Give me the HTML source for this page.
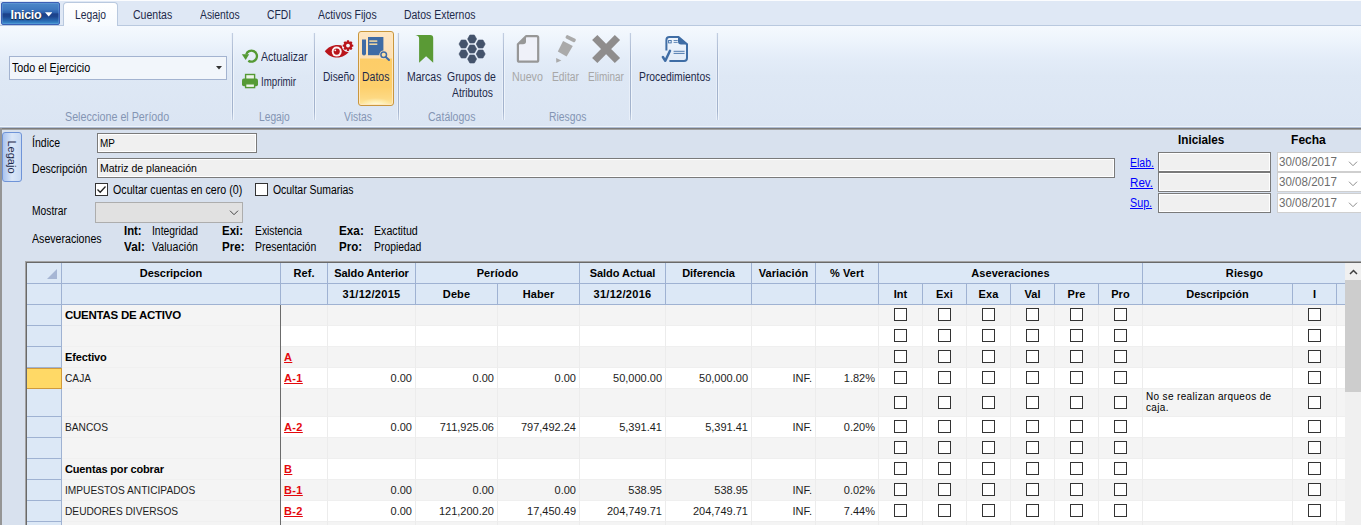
<!DOCTYPE html>
<html><head><meta charset="utf-8"><title>Legajo</title>
<style>
*{box-sizing:border-box;margin:0;padding:0}
html,body{width:1361px;height:525px;overflow:hidden}
body{font-family:"Liberation Sans",sans-serif;font-size:12px;color:#1e2a4a;background:#d8e1ee;position:relative}
.abs,.t{position:absolute;white-space:nowrap}
.t{line-height:14px;height:14px;transform-origin:0 50%}
#tabbar{position:absolute;left:0;top:0;width:1361px;height:26px;background:#dfe8f5;border-bottom:1px solid #b9c9df;border-top:1px solid #fbfcfe}
#inicio{position:absolute;left:1px;top:2px;width:59px;height:23px;border-radius:2px;border:1px solid #3a5fb6;background:linear-gradient(#4d88c9 0%,#3f78bf 30%,#2c60ad 46%,#1c4089 52%,#1d4690 65%,#2a6bb4 85%,#3d94d0 100%);box-shadow:inset 0 0 0 1px rgba(120,170,225,0.35);color:#fff;font-weight:bold;font-size:13px}
#tabsel{position:absolute;left:63px;top:2px;width:55px;height:25px;border:1px solid #b9c9df;border-bottom:0;border-radius:4px 4px 0 0;background:linear-gradient(#ffffff,#f6fafe)}
#ribbon{position:absolute;left:0;top:26px;width:1361px;height:100px;background:linear-gradient(#f5f9fe 0%,#edf4fc 15%,#e3ecf8 33%,#dee8f5 50%,#dbe5f3 100%)}
#ribbot{position:absolute;left:0;top:126px;width:1361px;height:4px;background:linear-gradient(#eef4fb 0,#eef4fb 1px,#aebcd3 1px,#aebcd3 2px,#7c7c7c 2px,#7c7c7c 3px,#a2a2a2 3px,#a2a2a2 4px)}
.sep{position:absolute;top:33px;width:1px;height:87px;background:linear-gradient(#c3cfe2,#a3b3cd 30%,#a3b3cd 90%,#c3cfe2);box-shadow:1px 0 0 #eef4fb,-1px 0 0 #e8eff9}
.gl{color:#8495b3}
.dis{color:#a7a7a7}
input{font-family:"Liberation Sans",sans-serif}
.tb{position:absolute;background:#f0f0f0;border:1px solid #7a7a7a;box-shadow:inset 1px 1px 0 #fff, inset -1px -1px 0 #fff}
.dp{position:absolute;background:#fff;border:1px solid #cfcfcf;color:#6d6d6d}
.chk{position:absolute;width:13px;height:13px;background:#fff;border:1px solid #333}
a.lk{position:absolute;color:#0000ff;text-decoration:underline;letter-spacing:-0.35px;line-height:14px}
#grid{position:absolute;left:26px;top:262px;width:1335px;height:263px;background:#fff;border-left:1px solid #696969;border-top:1px solid #696969;box-shadow:-1px 0 0 #a3a3a3,0 -1px 0 #a3a3a3,-1px -1px 0 #a3a3a3}
.h{position:absolute;background:#dce8f6;border-right:1px solid #9fb2d2;border-bottom:1px solid #9fb2d2;font-family:"Liberation Sans",sans-serif;font-weight:bold;font-size:11px;color:#000;text-align:center;line-height:20px;white-space:nowrap;overflow:hidden;letter-spacing:0.1px}
.r{position:absolute;left:0;width:1346px}
.rh{position:absolute;top:0;background:#dce8f6;border-right:1px solid #9fb2d2;border-bottom:1px solid #9fb2d2}
.rh.sel{background:#ffd966;border:1px solid #d09a3c;border-left:0}
.c{position:absolute;top:0;border-right:1px solid #ececec;border-bottom:1px solid #efefef;font-size:11px;color:#1c1c1c;white-space:nowrap;overflow:hidden}
.c.d{background:#f4f4f4;padding-left:3px;border-right:0;border-bottom:1px solid #f0f0f0}
.c.b{font-weight:bold;color:#000;letter-spacing:-0.15px}
.c.big{font-size:11.5px;letter-spacing:-0.25px}
.nr{display:inline-block;transform:scaleX(0.925);transform-origin:0 50%}
.c.ref{padding-left:3px;color:#e4080c;font-weight:bold;letter-spacing:0.35px}
.c.n{text-align:right;padding-right:3px}
.c.rk{white-space:normal;font-size:10px;line-height:11px;padding:2px 0 0 3px;letter-spacing:0.35px;color:#000}
.cb{position:absolute;left:15px;width:13px;height:13px;background:#fff;border:1px solid #333}
</style></head><body>

<!-- tab bar -->
<div id="tabbar"></div>
<div id="tabsel"></div>
<div id="inicio"><span class="t" style="left:8.500px;top:5px;font-size:12.500px;letter-spacing:-0.3px;text-shadow:0 1px 1px #123">Inicio</span>
<svg class="abs" style="left:43px;top:9px" width="7.400" height="4.600" viewBox="0 0 7 4"><path d="M0 0H7L3.500 4Z" fill="#fff"/></svg></div>

<!-- ribbon -->
<div id="ribbon"></div>
<div id="ribbot"></div>
<div class="sep" style="left:232px"></div>
<div class="sep" style="left:314px"></div>
<div class="sep" style="left:398px"></div>
<div class="sep" style="left:503px"></div>
<div class="sep" style="left:630px"></div>
<div class="sep" style="left:717px"></div>

<!-- combo -->
<div class="abs" style="left:9px;top:56px;width:218px;height:24px;background:#f2f6fb;border:1px solid #a3b3d0"></div>
<svg class="abs" style="left:216px;top:66px" width="6" height="4"><path d="M0 0H6L3 3.5Z" fill="#333"/></svg>

<!-- Legajo group -->


<!-- Vistas group -->
<div class="abs" style="left:358px;top:31px;width:36px;height:75px;border:1px solid #c9963e;border-radius:3px;background:radial-gradient(ellipse 16px 7px at 50% 100%,#fffbd8 0%,rgba(255,246,190,0) 100%),linear-gradient(#fee5c2 0px,#fddfb2 26px,#fdcd68 27px,#fdcf6c 55px,#fdd983 66px,#fee9a4 74px);box-shadow:inset 0 0 0 1px #ffe8be"></div>

<!-- Catalogos -->

<!-- Riesgos -->

<!-- Procedimientos -->

<svg class="abs" style="left:0;top:0" width="1361" height="126" viewBox="0 0 1361 126">
<!-- refresh -->
<path d="M246.200 54.500A5.500 5.500 0 1 1 248.300 60.700" fill="none" stroke="#559a35" stroke-width="2.300"/>
<path d="M241.800 54.200H249.200L245.700 59.900Z" fill="#559a35"/>
<!-- printer -->
<rect x="245.600" y="74.500" width="9" height="5.500" fill="#eef4ea" stroke="#559a35" stroke-width="1.400"/>
<rect x="242" y="78.600" width="16" height="7.600" rx="1.800" fill="#559a35"/>
<rect x="245.600" y="83.800" width="9" height="3.800" fill="#eef4ea" stroke="#559a35" stroke-width="1.400"/>
<!-- eye -->
<path d="M324.800 51.300C330 43.800 342 42.300 350 50C345 58.800 332 60.800 324.800 51.300Z" fill="#b9151b"/>
<circle cx="336.700" cy="51.600" r="5" fill="#fdf3f4"/>
<circle cx="336.700" cy="51.600" r="3.100" fill="#b9151b"/>
<circle cx="335.300" cy="50.300" r="0.900" fill="#fbeef0"/>
<circle cx="348" cy="45.600" r="6.300" fill="#eef4fb"/>
<g fill="#b9151b"><circle cx="348" cy="45.600" r="4.100"/>
<rect x="346.800" y="40.300" width="2.400" height="10.600" rx="0.600"/><rect x="346.800" y="40.300" width="2.400" height="10.600" rx="0.600" transform="rotate(45 348 45.600)"/><rect x="346.800" y="40.300" width="2.400" height="10.600" rx="0.600" transform="rotate(90 348 45.600)"/><rect x="346.800" y="40.300" width="2.400" height="10.600" rx="0.600" transform="rotate(135 348 45.600)"/></g>
<circle cx="348" cy="45.600" r="1.900" fill="#f4f8fd"/>
<!-- book -->
<path d="M362 39.500H366V53.500Q366 55.500 364 55.500Q362 55.500 362 53.500Z" fill="#3f6ba5"/>
<path d="M368 37H383.400V55.200H368Z" fill="#3f6ba5"/>
<rect x="369.300" y="40.300" width="8" height="1.600" fill="#ecd3a2"/><rect x="369.300" y="43.400" width="8" height="1.600" fill="#ecd3a2"/>
<circle cx="383.700" cy="54.800" r="4.400" fill="#fddfb2"/>
<circle cx="383.700" cy="54.800" r="2.800" fill="#fde0a6" stroke="#3f6ba5" stroke-width="1.500"/>
<path d="M385.800 57L389 60" stroke="#3f6ba5" stroke-width="2" stroke-linecap="round"/>
<!-- bookmark -->
<path d="M415.300 35H430.200Q433.200 35 433.200 38V62.800L426.100 56.300L419.100 62.800V38.500Q419.100 35.500 415.300 35Z" fill="#5a9a35"/>
<!-- hexes -->
<path d="M467.6 39L469.85 35.0H474.35L476.6 39L474.35 43.0H469.85ZM467.6 49L469.85 45.0H474.35L476.6 49L474.35 53.0H469.85ZM467.6 59L469.85 55.0H474.35L476.6 59L474.35 63.0H469.85ZM459.0 44L461.25 40.0H465.75L468.0 44L465.75 48.0H461.25ZM459.0 54L461.25 50.0H465.75L468.0 54L465.75 58.0H461.25ZM476.2 44L478.45 40.0H482.95L485.2 44L482.95 48.0H478.45ZM476.2 54L478.45 50.0H482.95L485.2 54L482.95 58.0H478.45Z" fill="#44536b" stroke="#44536b" stroke-width="0.600" stroke-linejoin="round"/>
<!-- new doc -->
<path d="M526 36.200H536.700Q538.200 36.200 538.200 37.700V60.200Q538.200 61.700 536.700 61.700H519.400Q517.900 61.700 517.900 60.200V44.300Z" fill="#eff1f9" stroke="#979797" stroke-width="2.200" stroke-linejoin="round"/>
<path d="M526 36.200V41.500Q526 44.300 523 44.300H517.900Z" fill="#979797"/>
<!-- pencil -->
<g fill="#aaaaaa"><path d="M563.100 41L572.800 45.900L566.600 56.500L557.800 51.600Z"/>
<rect x="565.400" y="36.800" width="10.600" height="3.700" rx="1.200" transform="rotate(26.500 570.700 38.650)"/>
<path d="M556.100 58L561.400 60.600L556.300 62.800Z"/></g>
<!-- cross -->
<path d="M594.750 37.500L617.450 60.500M617.450 37.500L594.750 60.500" stroke="#8f8d8d" stroke-width="7.400"/>
<!-- procedures -->
<g fill="none" stroke="#3f6da5">
<path d="M666.400 50.600V39.900Q666.400 36.900 669.400 36.900H678.500L687 44.200V58Q687 61 684 61H669.400" stroke-width="2"/>
<path d="M662.900 57L665.300 60.800L670 50.800" stroke-width="2.500" stroke-linecap="round" stroke-linejoin="round"/>
<rect x="668.600" y="40.500" width="2.600" height="2.400" stroke-width="0.900"/>
<path d="M673.600 40.500H677.700M673.600 42.400H677.700" stroke-width="0.800"/>
<path d="M673.600 51.300H684.600M673.600 53.400H684.600" stroke-width="0.900"/>
</g>
<path d="M678 36.200L688 44.600H681Q678 44.600 678 41.600Z" fill="#3f6da5"/>
</svg>
<!-- main panel -->
<div class="abs" style="left:0;top:128px;width:2px;height:397px;background:#959595"></div>
<div class="abs" style="left:2px;top:132px;width:20px;height:50px;border:1px solid #6f94d8;border-radius:3px;background:linear-gradient(90deg,#a9c3ef,#dbe7f8 50%,#c9daf3)"></div>
<span class="abs" style="left:-6px;top:150px;width:36px;height:14px;line-height:14px;transform:rotate(90deg);transform-origin:50% 50%;color:#1e2a4a;text-align:center;font-size:11px">Legajo</span>

<div class="tb" style="left:97px;top:133px;width:160px;height:20px"></div>
<div class="tb" style="left:97px;top:158px;width:1018px;height:20px"></div>

<div class="chk" style="left:95px;top:183px"></div>
<svg class="abs" style="left:95px;top:183px" width="13" height="13"><path d="M2.500 6.500L5.200 9.300L10.500 3.500" fill="none" stroke="#222" stroke-width="1.300"/></svg>
<div class="chk" style="left:255px;top:183px"></div>

<div class="abs" style="left:95px;top:202px;width:148px;height:21px;background:#e1e1e1;border:1px solid #adadad"></div>
<svg class="abs" style="left:229px;top:210px" width="10" height="6"><path d="M1 0.700L5 4.700L9 0.700" fill="none" stroke="#444" stroke-width="1"/></svg>


<!-- right block -->
<div class="tb" style="left:1158px;top:152px;width:113px;height:20px"></div>
<div class="tb" style="left:1158px;top:172px;width:113px;height:20px"></div>
<div class="tb" style="left:1158px;top:193px;width:113px;height:20px"></div>
<div class="dp" style="left:1277px;top:152px;width:90px;height:20px"></div>
<div class="dp" style="left:1277px;top:172px;width:90px;height:20px"></div>
<div class="dp" style="left:1277px;top:193px;width:90px;height:20px"></div>
<svg class="abs" style="left:1348px;top:160.500px" width="10" height="6"><path d="M1 0.700L5 4.700L9 0.700" fill="none" stroke="#8c8c8c" stroke-width="1"/></svg>
<svg class="abs" style="left:1348px;top:180.500px" width="10" height="6"><path d="M1 0.700L5 4.700L9 0.700" fill="none" stroke="#8c8c8c" stroke-width="1"/></svg>
<svg class="abs" style="left:1348px;top:201.500px" width="10" height="6"><path d="M1 0.700L5 4.700L9 0.700" fill="none" stroke="#8c8c8c" stroke-width="1"/></svg>

<span class="t" style="left:75.2px;top:8px;transform:scaleX(0.857);color:#1e2a4a">Legajo</span>
<span class="t" style="left:133.2px;top:8px;transform:scaleX(0.877);color:#1e2a4a">Cuentas</span>
<span class="t" style="left:199.7px;top:8px;transform:scaleX(0.860);color:#1e2a4a">Asientos</span>
<span class="t" style="left:266.5px;top:8px;transform:scaleX(0.861);color:#1e2a4a">CFDI</span>
<span class="t" style="left:317.9px;top:8px;transform:scaleX(0.871);color:#1e2a4a">Activos Fijos</span>
<span class="t" style="left:404.0px;top:8px;transform:scaleX(0.871);color:#1e2a4a">Datos Externos</span>
<span class="t" style="left:12.1px;top:61px;transform:scaleX(0.895);color:#000">Todo el Ejercicio</span>
<span class="t" style="left:65.0px;top:110px;transform:scaleX(0.893);color:#8495b3">Seleccione el Período</span>
<span class="t" style="left:260.7px;top:50px;transform:scaleX(0.881);color:#1e2a4a">Actualizar</span>
<span class="t" style="left:260.7px;top:75px;transform:scaleX(0.808);color:#1e2a4a">Imprimir</span>
<span class="t" style="left:259.3px;top:110px;transform:scaleX(0.854);color:#8495b3">Legajo</span>
<span class="t" style="left:323.3px;top:70px;transform:scaleX(0.851);color:#1e2a4a">Diseño</span>
<span class="t" style="left:362.2px;top:70px;transform:scaleX(0.874);color:#1e2a4a">Datos</span>
<span class="t" style="left:343.7px;top:110px;transform:scaleX(0.859);color:#8495b3">Vistas</span>
<span class="t" style="left:407.2px;top:70px;transform:scaleX(0.874);color:#1e2a4a">Marcas</span>
<span class="t" style="left:447.3px;top:70px;transform:scaleX(0.871);color:#1e2a4a">Grupos de</span>
<span class="t" style="left:451.7px;top:86px;transform:scaleX(0.864);color:#1e2a4a">Atributos</span>
<span class="t" style="left:428.2px;top:110px;transform:scaleX(0.877);color:#8495b3">Catálogos</span>
<span class="t" style="left:512.2px;top:70px;transform:scaleX(0.891);color:#a7a7a7">Nuevo</span>
<span class="t" style="left:552.2px;top:70px;transform:scaleX(0.858);color:#a7a7a7">Editar</span>
<span class="t" style="left:588.2px;top:70px;transform:scaleX(0.828);color:#a7a7a7">Eliminar</span>
<span class="t" style="left:549.2px;top:110px;transform:scaleX(0.863);color:#8495b3">Riesgos</span>
<span class="t" style="left:639.2px;top:70px;transform:scaleX(0.863);color:#1e2a4a">Procedimientos</span>
<span class="t" style="left:32.2px;top:136px;transform:scaleX(0.877);color:#000">Índice</span>
<span class="t" style="left:100.4px;top:136px;transform:scaleX(0.903);color:#000;font-size:11px">MP</span>
<span class="t" style="left:32.2px;top:162px;transform:scaleX(0.880);color:#000">Descripción</span>
<span class="t" style="left:100.4px;top:161px;transform:scaleX(0.954);color:#000;font-size:11px">Matriz de planeación</span>
<span class="t" style="left:113.4px;top:183px;transform:scaleX(0.889);color:#000">Ocultar cuentas en cero (0)</span>
<span class="t" style="left:272.7px;top:183px;transform:scaleX(0.869);color:#000">Ocultar Sumarias</span>
<span class="t" style="left:32.2px;top:204px;transform:scaleX(0.856);color:#000">Mostrar</span>
<span class="t" style="left:31.7px;top:232px;transform:scaleX(0.884);color:#000">Aseveraciones</span>
<span class="t" style="left:123.8px;top:224px;transform:scaleX(0.943);color:#000;font-weight:bold">Int:</span>
<span class="t" style="left:152.1px;top:224px;transform:scaleX(0.862);color:#000">Integridad</span>
<span class="t" style="left:221.6px;top:224px;transform:scaleX(0.958);color:#000;font-weight:bold">Exi:</span>
<span class="t" style="left:254.9px;top:224px;transform:scaleX(0.859);color:#000">Existencia</span>
<span class="t" style="left:339.3px;top:224px;transform:scaleX(0.978);color:#000;font-weight:bold">Exa:</span>
<span class="t" style="left:373.7px;top:224px;transform:scaleX(0.887);color:#000">Exactitud</span>
<span class="t" style="left:123.8px;top:240px;transform:scaleX(0.974);color:#000;font-weight:bold">Val:</span>
<span class="t" style="left:152.1px;top:240px;transform:scaleX(0.888);color:#000">Valuación</span>
<span class="t" style="left:221.6px;top:240px;transform:scaleX(0.964);color:#000;font-weight:bold">Pre:</span>
<span class="t" style="left:254.9px;top:240px;transform:scaleX(0.874);color:#000">Presentación</span>
<span class="t" style="left:339.3px;top:240px;transform:scaleX(0.962);color:#000;font-weight:bold">Pro:</span>
<span class="t" style="left:373.7px;top:240px;transform:scaleX(0.866);color:#000">Propiedad</span>
<span class="t" style="left:1178.3px;top:133px;transform:scaleX(0.979);color:#000;font-weight:bold">Iniciales</span>
<span class="t" style="left:1291.1px;top:133px;transform:scaleX(1.000);color:#000;font-weight:bold">Fecha</span>
<span class="t" style="left:1129.8px;top:156px;transform:scaleX(0.877);color:#0000ff;text-decoration:underline">Elab.</span>
<span class="t" style="left:1129.8px;top:176px;transform:scaleX(0.967);color:#0000ff;text-decoration:underline">Rev.</span>
<span class="t" style="left:1129.8px;top:196px;transform:scaleX(0.895);color:#0000ff;text-decoration:underline">Sup.</span>
<span class="t" style="left:1279.0px;top:155px;transform:scaleX(0.964);color:#6d6d6d">30/08/2017</span>
<span class="t" style="left:1279.0px;top:175px;transform:scaleX(0.964);color:#6d6d6d">30/08/2017</span>
<span class="t" style="left:1279.0px;top:196px;transform:scaleX(0.964);color:#6d6d6d">30/08/2017</span>
<!-- grid -->
<div id="grid"></div>
<div class="abs" style="left:0;top:0;width:1345px;height:525px;overflow:hidden">
<div class="h" style="left:27px;width:35px;top:263px;height:21px;"><svg width="12" height="12" style="position:absolute;left:19px;top:5px"><path d="M11 1V11H1Z" fill="#a6b6d4"/></svg></div>
<div class="h" style="left:27px;width:35px;top:284px;height:21px;"></div>
<div class="h" style="left:62px;width:219px;top:263px;height:21px;"><span style="letter-spacing:-0.05px">Descripcion</span></div>
<div class="h" style="left:62px;width:219px;top:284px;height:21px;"></div>
<div class="h" style="left:281px;width:47px;top:263px;height:21px;">Ref.</div>
<div class="h" style="left:281px;width:47px;top:284px;height:21px;"></div>
<div class="h" style="left:328px;width:88px;top:263px;height:21px;"><span style="letter-spacing:-0.05px">Saldo Anterior</span></div>
<div class="h" style="left:328px;width:88px;top:284px;height:21px;"><span style="letter-spacing:0.3px">31/12/2015</span></div>
<div class="h" style="left:416px;width:164px;top:263px;height:21px;">Período</div>
<div class="h" style="left:416px;width:82px;top:284px;height:21px;">Debe</div>
<div class="h" style="left:498px;width:82px;top:284px;height:21px;">Haber</div>
<div class="h" style="left:580px;width:86px;top:263px;height:21px;"><span style="letter-spacing:-0.05px">Saldo Actual</span></div>
<div class="h" style="left:580px;width:86px;top:284px;height:21px;"><span style="letter-spacing:0.3px">31/12/2016</span></div>
<div class="h" style="left:666px;width:86px;top:263px;height:21px;"><span style="letter-spacing:-0.05px">Diferencia</span></div>
<div class="h" style="left:666px;width:86px;top:284px;height:21px;"></div>
<div class="h" style="left:752px;width:64px;top:263px;height:21px;"><span style="letter-spacing:0.05px">Variación</span></div>
<div class="h" style="left:752px;width:64px;top:284px;height:21px;"></div>
<div class="h" style="left:816px;width:63px;top:263px;height:21px;">% Vert</div>
<div class="h" style="left:816px;width:63px;top:284px;height:21px;"></div>
<div class="h" style="left:879px;width:264px;top:263px;height:21px;"><span style="letter-spacing:0.05px">Aseveraciones</span></div>
<div class="h" style="left:879px;width:44px;top:284px;height:21px;">Int</div>
<div class="h" style="left:923px;width:44px;top:284px;height:21px;">Exi</div>
<div class="h" style="left:967px;width:44px;top:284px;height:21px;">Exa</div>
<div class="h" style="left:1011px;width:44px;top:284px;height:21px;">Val</div>
<div class="h" style="left:1055px;width:44px;top:284px;height:21px;">Pre</div>
<div class="h" style="left:1099px;width:44px;top:284px;height:21px;">Pro</div>
<div class="h" style="left:1143px;width:203px;top:263px;height:21px;border-right:0">Riesgo</div>
<div class="h" style="left:1143px;width:150px;top:284px;height:21px;"><span style="letter-spacing:-0.05px">Descripción</span></div>
<div class="h" style="left:1293px;width:44px;top:284px;height:21px;">I</div>
<div class="h" style="left:1337px;width:9px;top:284px;height:21px;border-right:0"></div>
<div class="r" style="top:305px;height:21px">
<div class="rh" style="left:27px;width:35px;height:21px"></div>
<div class="c d b big" style="left:62px;width:218px;height:21px;line-height:20px">CUENTAS DE ACTIVO</div>
<div class="c ref" style="left:281px;width:47px;height:21px;line-height:20px;background:#f4f4f4"></div>
<div class="c n" style="left:328px;width:88px;height:21px;line-height:20px;background:#f4f4f4"></div>
<div class="c n" style="left:416px;width:82px;height:21px;line-height:20px;background:#f4f4f4"></div>
<div class="c n" style="left:498px;width:82px;height:21px;line-height:20px;background:#f4f4f4"></div>
<div class="c n" style="left:580px;width:86px;height:21px;line-height:20px;background:#f4f4f4"></div>
<div class="c n" style="left:666px;width:86px;height:21px;line-height:20px;background:#f4f4f4"></div>
<div class="c n" style="left:752px;width:64px;height:21px;line-height:20px;background:#f4f4f4"></div>
<div class="c n" style="left:816px;width:63px;height:21px;line-height:20px;background:#f4f4f4"></div>
<div class="c" style="left:879px;width:44px;height:21px;background:#f4f4f4"><i class="cb" style="top:3px"></i></div>
<div class="c" style="left:923px;width:44px;height:21px;background:#f4f4f4"><i class="cb" style="top:3px"></i></div>
<div class="c" style="left:967px;width:44px;height:21px;background:#f4f4f4"><i class="cb" style="top:3px"></i></div>
<div class="c" style="left:1011px;width:44px;height:21px;background:#f4f4f4"><i class="cb" style="top:3px"></i></div>
<div class="c" style="left:1055px;width:44px;height:21px;background:#f4f4f4"><i class="cb" style="top:3px"></i></div>
<div class="c" style="left:1099px;width:44px;height:21px;background:#f4f4f4"><i class="cb" style="top:3px"></i></div>
<div class="c rk" style="left:1143px;width:150px;height:21px;background:#f4f4f4"></div>
<div class="c" style="left:1293px;width:44px;height:21px;background:#f4f4f4"><i class="cb" style="top:3px"></i></div>
<div class="c" style="left:1337px;width:9px;height:21px;background:#f4f4f4;border-right:0"></div>
</div>
<div class="r" style="top:326px;height:21px">
<div class="rh" style="left:27px;width:35px;height:21px"></div>
<div class="c d" style="left:62px;width:218px;height:21px;line-height:20px"><span class="nr"></span></div>
<div class="c ref" style="left:281px;width:47px;height:21px;line-height:20px;background:#ffffff"></div>
<div class="c n" style="left:328px;width:88px;height:21px;line-height:20px;background:#ffffff"></div>
<div class="c n" style="left:416px;width:82px;height:21px;line-height:20px;background:#ffffff"></div>
<div class="c n" style="left:498px;width:82px;height:21px;line-height:20px;background:#ffffff"></div>
<div class="c n" style="left:580px;width:86px;height:21px;line-height:20px;background:#ffffff"></div>
<div class="c n" style="left:666px;width:86px;height:21px;line-height:20px;background:#ffffff"></div>
<div class="c n" style="left:752px;width:64px;height:21px;line-height:20px;background:#ffffff"></div>
<div class="c n" style="left:816px;width:63px;height:21px;line-height:20px;background:#ffffff"></div>
<div class="c" style="left:879px;width:44px;height:21px;background:#ffffff"><i class="cb" style="top:3px"></i></div>
<div class="c" style="left:923px;width:44px;height:21px;background:#ffffff"><i class="cb" style="top:3px"></i></div>
<div class="c" style="left:967px;width:44px;height:21px;background:#ffffff"><i class="cb" style="top:3px"></i></div>
<div class="c" style="left:1011px;width:44px;height:21px;background:#ffffff"><i class="cb" style="top:3px"></i></div>
<div class="c" style="left:1055px;width:44px;height:21px;background:#ffffff"><i class="cb" style="top:3px"></i></div>
<div class="c" style="left:1099px;width:44px;height:21px;background:#ffffff"><i class="cb" style="top:3px"></i></div>
<div class="c rk" style="left:1143px;width:150px;height:21px;background:#ffffff"></div>
<div class="c" style="left:1293px;width:44px;height:21px;background:#ffffff"><i class="cb" style="top:3px"></i></div>
<div class="c" style="left:1337px;width:9px;height:21px;background:#ffffff;border-right:0"></div>
</div>
<div class="r" style="top:347px;height:21px">
<div class="rh" style="left:27px;width:35px;height:21px"></div>
<div class="c d b" style="left:62px;width:218px;height:21px;line-height:20px">Efectivo</div>
<div class="c ref" style="left:281px;width:47px;height:21px;line-height:20px;background:#f4f4f4"><u>A</u></div>
<div class="c n" style="left:328px;width:88px;height:21px;line-height:20px;background:#f4f4f4"></div>
<div class="c n" style="left:416px;width:82px;height:21px;line-height:20px;background:#f4f4f4"></div>
<div class="c n" style="left:498px;width:82px;height:21px;line-height:20px;background:#f4f4f4"></div>
<div class="c n" style="left:580px;width:86px;height:21px;line-height:20px;background:#f4f4f4"></div>
<div class="c n" style="left:666px;width:86px;height:21px;line-height:20px;background:#f4f4f4"></div>
<div class="c n" style="left:752px;width:64px;height:21px;line-height:20px;background:#f4f4f4"></div>
<div class="c n" style="left:816px;width:63px;height:21px;line-height:20px;background:#f4f4f4"></div>
<div class="c" style="left:879px;width:44px;height:21px;background:#f4f4f4"><i class="cb" style="top:3px"></i></div>
<div class="c" style="left:923px;width:44px;height:21px;background:#f4f4f4"><i class="cb" style="top:3px"></i></div>
<div class="c" style="left:967px;width:44px;height:21px;background:#f4f4f4"><i class="cb" style="top:3px"></i></div>
<div class="c" style="left:1011px;width:44px;height:21px;background:#f4f4f4"><i class="cb" style="top:3px"></i></div>
<div class="c" style="left:1055px;width:44px;height:21px;background:#f4f4f4"><i class="cb" style="top:3px"></i></div>
<div class="c" style="left:1099px;width:44px;height:21px;background:#f4f4f4"><i class="cb" style="top:3px"></i></div>
<div class="c rk" style="left:1143px;width:150px;height:21px;background:#f4f4f4"></div>
<div class="c" style="left:1293px;width:44px;height:21px;background:#f4f4f4"><i class="cb" style="top:3px"></i></div>
<div class="c" style="left:1337px;width:9px;height:21px;background:#f4f4f4;border-right:0"></div>
</div>
<div class="r" style="top:368px;height:21px">
<div class="rh sel" style="left:27px;width:35px;height:21px"></div>
<div class="c d" style="left:62px;width:218px;height:21px;line-height:20px"><span class="nr">CAJA</span></div>
<div class="c ref" style="left:281px;width:47px;height:21px;line-height:20px;background:#ffffff"><u>A-1</u></div>
<div class="c n" style="left:328px;width:88px;height:21px;line-height:20px;background:#ffffff">0.00</div>
<div class="c n" style="left:416px;width:82px;height:21px;line-height:20px;background:#ffffff">0.00</div>
<div class="c n" style="left:498px;width:82px;height:21px;line-height:20px;background:#ffffff">0.00</div>
<div class="c n" style="left:580px;width:86px;height:21px;line-height:20px;background:#ffffff">50,000.00</div>
<div class="c n" style="left:666px;width:86px;height:21px;line-height:20px;background:#ffffff">50,000.00</div>
<div class="c n" style="left:752px;width:64px;height:21px;line-height:20px;background:#ffffff">INF.</div>
<div class="c n" style="left:816px;width:63px;height:21px;line-height:20px;background:#ffffff">1.82%</div>
<div class="c" style="left:879px;width:44px;height:21px;background:#ffffff"><i class="cb" style="top:3px"></i></div>
<div class="c" style="left:923px;width:44px;height:21px;background:#ffffff"><i class="cb" style="top:3px"></i></div>
<div class="c" style="left:967px;width:44px;height:21px;background:#ffffff"><i class="cb" style="top:3px"></i></div>
<div class="c" style="left:1011px;width:44px;height:21px;background:#ffffff"><i class="cb" style="top:3px"></i></div>
<div class="c" style="left:1055px;width:44px;height:21px;background:#ffffff"><i class="cb" style="top:3px"></i></div>
<div class="c" style="left:1099px;width:44px;height:21px;background:#ffffff"><i class="cb" style="top:3px"></i></div>
<div class="c rk" style="left:1143px;width:150px;height:21px;background:#ffffff"></div>
<div class="c" style="left:1293px;width:44px;height:21px;background:#ffffff"><i class="cb" style="top:3px"></i></div>
<div class="c" style="left:1337px;width:9px;height:21px;background:#ffffff;border-right:0"></div>
</div>
<div class="r" style="top:389px;height:28px">
<div class="rh" style="left:27px;width:35px;height:28px"></div>
<div class="c d" style="left:62px;width:218px;height:28px;line-height:27px"><span class="nr"></span></div>
<div class="c ref" style="left:281px;width:47px;height:28px;line-height:27px;background:#f4f4f4"></div>
<div class="c n" style="left:328px;width:88px;height:28px;line-height:27px;background:#f4f4f4"></div>
<div class="c n" style="left:416px;width:82px;height:28px;line-height:27px;background:#f4f4f4"></div>
<div class="c n" style="left:498px;width:82px;height:28px;line-height:27px;background:#f4f4f4"></div>
<div class="c n" style="left:580px;width:86px;height:28px;line-height:27px;background:#f4f4f4"></div>
<div class="c n" style="left:666px;width:86px;height:28px;line-height:27px;background:#f4f4f4"></div>
<div class="c n" style="left:752px;width:64px;height:28px;line-height:27px;background:#f4f4f4"></div>
<div class="c n" style="left:816px;width:63px;height:28px;line-height:27px;background:#f4f4f4"></div>
<div class="c" style="left:879px;width:44px;height:28px;background:#f4f4f4"><i class="cb" style="top:7px"></i></div>
<div class="c" style="left:923px;width:44px;height:28px;background:#f4f4f4"><i class="cb" style="top:7px"></i></div>
<div class="c" style="left:967px;width:44px;height:28px;background:#f4f4f4"><i class="cb" style="top:7px"></i></div>
<div class="c" style="left:1011px;width:44px;height:28px;background:#f4f4f4"><i class="cb" style="top:7px"></i></div>
<div class="c" style="left:1055px;width:44px;height:28px;background:#f4f4f4"><i class="cb" style="top:7px"></i></div>
<div class="c" style="left:1099px;width:44px;height:28px;background:#f4f4f4"><i class="cb" style="top:7px"></i></div>
<div class="c rk" style="left:1143px;width:150px;height:28px;background:#f4f4f4">No se realizan arqueos de<br>caja.</div>
<div class="c" style="left:1293px;width:44px;height:28px;background:#f4f4f4"><i class="cb" style="top:7px"></i></div>
<div class="c" style="left:1337px;width:9px;height:28px;background:#f4f4f4;border-right:0"></div>
</div>
<div class="r" style="top:417px;height:21px">
<div class="rh" style="left:27px;width:35px;height:21px"></div>
<div class="c d" style="left:62px;width:218px;height:21px;line-height:20px"><span class="nr">BANCOS</span></div>
<div class="c ref" style="left:281px;width:47px;height:21px;line-height:20px;background:#ffffff"><u>A-2</u></div>
<div class="c n" style="left:328px;width:88px;height:21px;line-height:20px;background:#ffffff">0.00</div>
<div class="c n" style="left:416px;width:82px;height:21px;line-height:20px;background:#ffffff">711,925.06</div>
<div class="c n" style="left:498px;width:82px;height:21px;line-height:20px;background:#ffffff">797,492.24</div>
<div class="c n" style="left:580px;width:86px;height:21px;line-height:20px;background:#ffffff">5,391.41</div>
<div class="c n" style="left:666px;width:86px;height:21px;line-height:20px;background:#ffffff">5,391.41</div>
<div class="c n" style="left:752px;width:64px;height:21px;line-height:20px;background:#ffffff">INF.</div>
<div class="c n" style="left:816px;width:63px;height:21px;line-height:20px;background:#ffffff">0.20%</div>
<div class="c" style="left:879px;width:44px;height:21px;background:#ffffff"><i class="cb" style="top:3px"></i></div>
<div class="c" style="left:923px;width:44px;height:21px;background:#ffffff"><i class="cb" style="top:3px"></i></div>
<div class="c" style="left:967px;width:44px;height:21px;background:#ffffff"><i class="cb" style="top:3px"></i></div>
<div class="c" style="left:1011px;width:44px;height:21px;background:#ffffff"><i class="cb" style="top:3px"></i></div>
<div class="c" style="left:1055px;width:44px;height:21px;background:#ffffff"><i class="cb" style="top:3px"></i></div>
<div class="c" style="left:1099px;width:44px;height:21px;background:#ffffff"><i class="cb" style="top:3px"></i></div>
<div class="c rk" style="left:1143px;width:150px;height:21px;background:#ffffff"></div>
<div class="c" style="left:1293px;width:44px;height:21px;background:#ffffff"><i class="cb" style="top:3px"></i></div>
<div class="c" style="left:1337px;width:9px;height:21px;background:#ffffff;border-right:0"></div>
</div>
<div class="r" style="top:438px;height:21px">
<div class="rh" style="left:27px;width:35px;height:21px"></div>
<div class="c d" style="left:62px;width:218px;height:21px;line-height:20px"><span class="nr"></span></div>
<div class="c ref" style="left:281px;width:47px;height:21px;line-height:20px;background:#f4f4f4"></div>
<div class="c n" style="left:328px;width:88px;height:21px;line-height:20px;background:#f4f4f4"></div>
<div class="c n" style="left:416px;width:82px;height:21px;line-height:20px;background:#f4f4f4"></div>
<div class="c n" style="left:498px;width:82px;height:21px;line-height:20px;background:#f4f4f4"></div>
<div class="c n" style="left:580px;width:86px;height:21px;line-height:20px;background:#f4f4f4"></div>
<div class="c n" style="left:666px;width:86px;height:21px;line-height:20px;background:#f4f4f4"></div>
<div class="c n" style="left:752px;width:64px;height:21px;line-height:20px;background:#f4f4f4"></div>
<div class="c n" style="left:816px;width:63px;height:21px;line-height:20px;background:#f4f4f4"></div>
<div class="c" style="left:879px;width:44px;height:21px;background:#f4f4f4"><i class="cb" style="top:3px"></i></div>
<div class="c" style="left:923px;width:44px;height:21px;background:#f4f4f4"><i class="cb" style="top:3px"></i></div>
<div class="c" style="left:967px;width:44px;height:21px;background:#f4f4f4"><i class="cb" style="top:3px"></i></div>
<div class="c" style="left:1011px;width:44px;height:21px;background:#f4f4f4"><i class="cb" style="top:3px"></i></div>
<div class="c" style="left:1055px;width:44px;height:21px;background:#f4f4f4"><i class="cb" style="top:3px"></i></div>
<div class="c" style="left:1099px;width:44px;height:21px;background:#f4f4f4"><i class="cb" style="top:3px"></i></div>
<div class="c rk" style="left:1143px;width:150px;height:21px;background:#f4f4f4"></div>
<div class="c" style="left:1293px;width:44px;height:21px;background:#f4f4f4"><i class="cb" style="top:3px"></i></div>
<div class="c" style="left:1337px;width:9px;height:21px;background:#f4f4f4;border-right:0"></div>
</div>
<div class="r" style="top:459px;height:21px">
<div class="rh" style="left:27px;width:35px;height:21px"></div>
<div class="c d b" style="left:62px;width:218px;height:21px;line-height:20px">Cuentas por cobrar</div>
<div class="c ref" style="left:281px;width:47px;height:21px;line-height:20px;background:#ffffff"><u>B</u></div>
<div class="c n" style="left:328px;width:88px;height:21px;line-height:20px;background:#ffffff"></div>
<div class="c n" style="left:416px;width:82px;height:21px;line-height:20px;background:#ffffff"></div>
<div class="c n" style="left:498px;width:82px;height:21px;line-height:20px;background:#ffffff"></div>
<div class="c n" style="left:580px;width:86px;height:21px;line-height:20px;background:#ffffff"></div>
<div class="c n" style="left:666px;width:86px;height:21px;line-height:20px;background:#ffffff"></div>
<div class="c n" style="left:752px;width:64px;height:21px;line-height:20px;background:#ffffff"></div>
<div class="c n" style="left:816px;width:63px;height:21px;line-height:20px;background:#ffffff"></div>
<div class="c" style="left:879px;width:44px;height:21px;background:#ffffff"><i class="cb" style="top:3px"></i></div>
<div class="c" style="left:923px;width:44px;height:21px;background:#ffffff"><i class="cb" style="top:3px"></i></div>
<div class="c" style="left:967px;width:44px;height:21px;background:#ffffff"><i class="cb" style="top:3px"></i></div>
<div class="c" style="left:1011px;width:44px;height:21px;background:#ffffff"><i class="cb" style="top:3px"></i></div>
<div class="c" style="left:1055px;width:44px;height:21px;background:#ffffff"><i class="cb" style="top:3px"></i></div>
<div class="c" style="left:1099px;width:44px;height:21px;background:#ffffff"><i class="cb" style="top:3px"></i></div>
<div class="c rk" style="left:1143px;width:150px;height:21px;background:#ffffff"></div>
<div class="c" style="left:1293px;width:44px;height:21px;background:#ffffff"><i class="cb" style="top:3px"></i></div>
<div class="c" style="left:1337px;width:9px;height:21px;background:#ffffff;border-right:0"></div>
</div>
<div class="r" style="top:480px;height:21px">
<div class="rh" style="left:27px;width:35px;height:21px"></div>
<div class="c d" style="left:62px;width:218px;height:21px;line-height:20px"><span class="nr">IMPUESTOS ANTICIPADOS</span></div>
<div class="c ref" style="left:281px;width:47px;height:21px;line-height:20px;background:#f4f4f4"><u>B-1</u></div>
<div class="c n" style="left:328px;width:88px;height:21px;line-height:20px;background:#f4f4f4">0.00</div>
<div class="c n" style="left:416px;width:82px;height:21px;line-height:20px;background:#f4f4f4">0.00</div>
<div class="c n" style="left:498px;width:82px;height:21px;line-height:20px;background:#f4f4f4">0.00</div>
<div class="c n" style="left:580px;width:86px;height:21px;line-height:20px;background:#f4f4f4">538.95</div>
<div class="c n" style="left:666px;width:86px;height:21px;line-height:20px;background:#f4f4f4">538.95</div>
<div class="c n" style="left:752px;width:64px;height:21px;line-height:20px;background:#f4f4f4">INF.</div>
<div class="c n" style="left:816px;width:63px;height:21px;line-height:20px;background:#f4f4f4">0.02%</div>
<div class="c" style="left:879px;width:44px;height:21px;background:#f4f4f4"><i class="cb" style="top:3px"></i></div>
<div class="c" style="left:923px;width:44px;height:21px;background:#f4f4f4"><i class="cb" style="top:3px"></i></div>
<div class="c" style="left:967px;width:44px;height:21px;background:#f4f4f4"><i class="cb" style="top:3px"></i></div>
<div class="c" style="left:1011px;width:44px;height:21px;background:#f4f4f4"><i class="cb" style="top:3px"></i></div>
<div class="c" style="left:1055px;width:44px;height:21px;background:#f4f4f4"><i class="cb" style="top:3px"></i></div>
<div class="c" style="left:1099px;width:44px;height:21px;background:#f4f4f4"><i class="cb" style="top:3px"></i></div>
<div class="c rk" style="left:1143px;width:150px;height:21px;background:#f4f4f4"></div>
<div class="c" style="left:1293px;width:44px;height:21px;background:#f4f4f4"><i class="cb" style="top:3px"></i></div>
<div class="c" style="left:1337px;width:9px;height:21px;background:#f4f4f4;border-right:0"></div>
</div>
<div class="r" style="top:501px;height:21px">
<div class="rh" style="left:27px;width:35px;height:21px"></div>
<div class="c d" style="left:62px;width:218px;height:21px;line-height:20px"><span class="nr">DEUDORES DIVERSOS</span></div>
<div class="c ref" style="left:281px;width:47px;height:21px;line-height:20px;background:#ffffff"><u>B-2</u></div>
<div class="c n" style="left:328px;width:88px;height:21px;line-height:20px;background:#ffffff">0.00</div>
<div class="c n" style="left:416px;width:82px;height:21px;line-height:20px;background:#ffffff">121,200.20</div>
<div class="c n" style="left:498px;width:82px;height:21px;line-height:20px;background:#ffffff">17,450.49</div>
<div class="c n" style="left:580px;width:86px;height:21px;line-height:20px;background:#ffffff">204,749.71</div>
<div class="c n" style="left:666px;width:86px;height:21px;line-height:20px;background:#ffffff">204,749.71</div>
<div class="c n" style="left:752px;width:64px;height:21px;line-height:20px;background:#ffffff">INF.</div>
<div class="c n" style="left:816px;width:63px;height:21px;line-height:20px;background:#ffffff">7.44%</div>
<div class="c" style="left:879px;width:44px;height:21px;background:#ffffff"><i class="cb" style="top:3px"></i></div>
<div class="c" style="left:923px;width:44px;height:21px;background:#ffffff"><i class="cb" style="top:3px"></i></div>
<div class="c" style="left:967px;width:44px;height:21px;background:#ffffff"><i class="cb" style="top:3px"></i></div>
<div class="c" style="left:1011px;width:44px;height:21px;background:#ffffff"><i class="cb" style="top:3px"></i></div>
<div class="c" style="left:1055px;width:44px;height:21px;background:#ffffff"><i class="cb" style="top:3px"></i></div>
<div class="c" style="left:1099px;width:44px;height:21px;background:#ffffff"><i class="cb" style="top:3px"></i></div>
<div class="c rk" style="left:1143px;width:150px;height:21px;background:#ffffff"></div>
<div class="c" style="left:1293px;width:44px;height:21px;background:#ffffff"><i class="cb" style="top:3px"></i></div>
<div class="c" style="left:1337px;width:9px;height:21px;background:#ffffff;border-right:0"></div>
</div>
<div class="r" style="top:522px;height:21px">
<div class="rh" style="left:27px;width:35px;height:21px"></div>
<div class="c d" style="left:62px;width:218px;height:21px;line-height:20px"><span class="nr"></span></div>
<div class="c ref" style="left:281px;width:47px;height:21px;line-height:20px;background:#f4f4f4"></div>
<div class="c n" style="left:328px;width:88px;height:21px;line-height:20px;background:#f4f4f4"></div>
<div class="c n" style="left:416px;width:82px;height:21px;line-height:20px;background:#f4f4f4"></div>
<div class="c n" style="left:498px;width:82px;height:21px;line-height:20px;background:#f4f4f4"></div>
<div class="c n" style="left:580px;width:86px;height:21px;line-height:20px;background:#f4f4f4"></div>
<div class="c n" style="left:666px;width:86px;height:21px;line-height:20px;background:#f4f4f4"></div>
<div class="c n" style="left:752px;width:64px;height:21px;line-height:20px;background:#f4f4f4"></div>
<div class="c n" style="left:816px;width:63px;height:21px;line-height:20px;background:#f4f4f4"></div>
<div class="c" style="left:879px;width:44px;height:21px;background:#f4f4f4"><i class="cb" style="top:3px"></i></div>
<div class="c" style="left:923px;width:44px;height:21px;background:#f4f4f4"><i class="cb" style="top:3px"></i></div>
<div class="c" style="left:967px;width:44px;height:21px;background:#f4f4f4"><i class="cb" style="top:3px"></i></div>
<div class="c" style="left:1011px;width:44px;height:21px;background:#f4f4f4"><i class="cb" style="top:3px"></i></div>
<div class="c" style="left:1055px;width:44px;height:21px;background:#f4f4f4"><i class="cb" style="top:3px"></i></div>
<div class="c" style="left:1099px;width:44px;height:21px;background:#f4f4f4"><i class="cb" style="top:3px"></i></div>
<div class="c rk" style="left:1143px;width:150px;height:21px;background:#f4f4f4"></div>
<div class="c" style="left:1293px;width:44px;height:21px;background:#f4f4f4"><i class="cb" style="top:3px"></i></div>
<div class="c" style="left:1337px;width:9px;height:21px;background:#f4f4f4;border-right:0"></div>
</div>
<div class="abs" style="left:280px;top:305px;width:1px;height:220px;background:#6b6b6b"></div>
</div>
<!-- scrollbar -->
<div class="abs" style="left:1345px;top:263px;width:16px;height:262px;background:#f0f0f0"></div>
<svg class="abs" style="left:1349px;top:269px" width="9" height="6"><path d="M1 5L4.500 1.500L8 5" fill="none" stroke="#404040" stroke-width="1.500"/></svg>
<div class="abs" style="left:1345px;top:280px;width:16px;height:112px;background:#cdcdcd"></div>
</body></html>
